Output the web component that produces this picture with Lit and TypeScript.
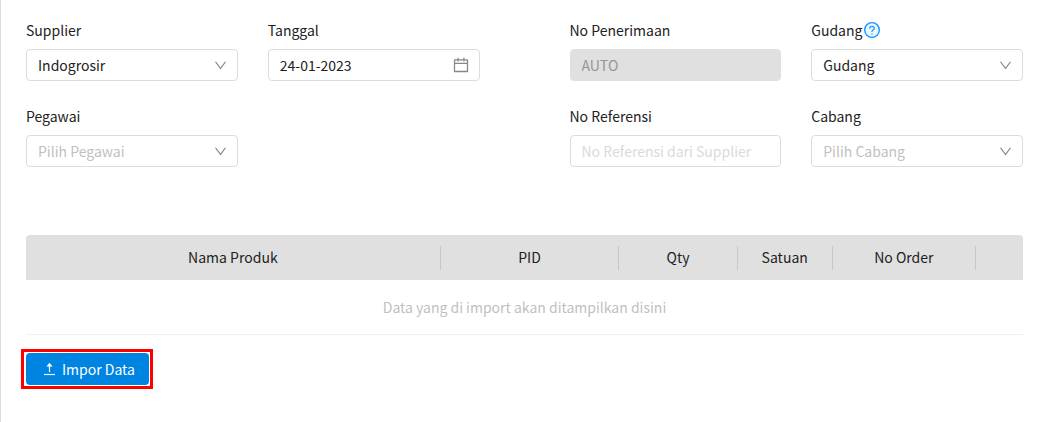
import { LitElement, html, css, nothing } from "lit";
import { customElement } from "lit/decorators.js";

const chevron = html`<svg class="chevron" viewBox="64 64 896 896" aria-hidden="true">
  <path d="M884 256h-75c-5.1 0-9.9 2.5-12.9 6.6L512 654.2 227.9 262.6c-3-4.1-7.8-6.6-12.9-6.6h-75c-6.5 0-10.3 7.4-6.5 12.7l352.6 486.1c12.8 17.6 39 17.6 51.7 0l352.6-486.1c3.9-5.3.1-12.7-6.4-12.7z"/>
</svg>`;

const calendar = html`<svg class="calendar" viewBox="64 64 896 896" aria-hidden="true">
  <path d="M880 184H712v-64c0-4.4-3.6-8-8-8h-56c-4.4 0-8 3.6-8 8v64H384v-64c0-4.4-3.6-8-8-8h-56c-4.4 0-8 3.6-8 8v64H144c-17.7 0-32 14.3-32 32v664c0 17.7 14.3 32 32 32h736c17.7 0 32-14.3 32-32V216c0-17.7-14.3-32-32-32zm-40 656H184V460h656v380zM184 392V256h128v48c0 4.4 3.6 8 8 8h56c4.4 0 8-3.6 8-8v-48h256v48c0 4.4 3.6 8 8 8h56c4.4 0 8-3.6 8-8v-48h128v136H184z"/>
</svg>`;

const question = html`<svg class="question" viewBox="64 64 896 896" aria-hidden="true">
  <circle cx="512" cy="512" r="410" fill="#e6f7ff" stroke="#1890ff" stroke-width="76"/>
  <path fill="#1890ff" d="M623.6 316.7C593.6 290.4 554 276 512 276s-81.6 14.5-111.6 40.7C369.2 344 352 380.7 352 420v7.6c0 4.4 3.6 8 8 8h48c4.4 0 8-3.6 8-8V420c0-44.1 43.1-80 96-80s96 35.9 96 80c0 31.1-22 59.6-56.1 72.7-21.2 8.1-39.2 22.3-52.1 40.9-13.1 19-19.9 41.8-19.9 64.9V620c0 4.4 3.6 8 8 8h48c4.4 0 8-3.6 8-8v-22.7a48.3 48.3 0 0130.9-44.8c59-22.7 97.1-74.7 97.1-132.5.1-39.3-17.1-76-48.3-103.3zM472 732a40 40 0 1080 0 40 40 0 10-80 0z"/>
</svg>`;

const upload = html`<svg class="upload" viewBox="0 0 14 14" aria-hidden="true">
  <path d="M6.5 10V3" stroke="currentColor" stroke-width="1.2"/>
  <path d="M6.5 .8L9.6 4.6H3.4z"/>
  <path d="M1 12.5h11" stroke="currentColor" stroke-width="1.2"/>
</svg>`;

const columns = [
  { title: "Nama Produk", width: 41.6 },
  { title: "PID", width: 17.9 },
  { title: "Qty", width: 11.9 },
  { title: "Satuan", width: 9.5 },
  { title: "No Order", width: 14.4 },
  { title: "", width: 4.7 },
];

@customElement("app-root")
export class AppRoot extends LitElement {
  static styles = css`
    :host {
      display: block;
      min-height: 100vh;
      box-sizing: border-box;
      border-left: 1px solid #dcdcdc;
      padding: 19px 25px;
      background: #fff;
      color: #222;
      font-family: "Noto Sans CJK SC", "Noto Sans", sans-serif;
      font-size: 14px;
      line-height: 22px;
    }
    * { box-sizing: border-box; }
    .form {
      display: grid;
      grid-template-columns: 1fr 1fr;
      column-gap: 90px;
    }
    .group {
      display: grid;
      grid-template-columns: 1fr 1fr;
      gap: 24px 30px;
      align-content: start;
    }
    .field {
      display: flex;
      flex-direction: column;
      gap: 8px;
      min-width: 0;
    }
    .label { display: flex; align-items: center; gap: 2px; }
    .control { display: grid; align-items: center; }
    .control > * { grid-area: 1 / 1; }
    .input {
      appearance: none;
      width: 100%;
      height: 32px;
      margin: 0;
      padding: 0 11px;
      border: 1px solid #dcdcdc;
      border-radius: 4px;
      background: #fff;
      color: inherit;
      font: inherit;
      opacity: 1;
    }
    .input::placeholder { color: #dadada; opacity: 1; }
    .input.empty { color: #bfbfbf; }
    .input:disabled { background: #e0e0e0; border-color: #e0e0e0; color: #969696; }
    svg { display: block; fill: currentColor; }
    .chevron, .calendar {
      justify-self: end;
      margin-right: 11px;
      pointer-events: none;
      color: #888;
    }
    .chevron { width: 13px; height: 13px; }
    .calendar { width: 16px; height: 16px; }
    .question { width: 16px; height: 16px; }
    .table {
      width: 100%;
      margin-top: 68px;
      border-collapse: separate;
      border-spacing: 0;
      table-layout: fixed;
      text-align: center;
    }
    .head {
      height: 45px;
      padding: 0;
      background: #e0e0e0;
      font-weight: 400;
    }
    .head:first-child { border-top-left-radius: 4px; }
    .head:last-child { border-top-right-radius: 4px; }
    .title {
      display: block;
      height: 24px;
      line-height: 22px;
      border-right: 1px solid #c8c8c8;
    }
    .head:last-child .title { border-right: 0; }
    .none {
      height: 55px;
      padding: 0;
      border-bottom: 1px solid #f0f0f0;
      color: #bfbfbf;
    }
    .highlight {
      width: fit-content;
      margin: 14px 0 0 -5px;
      padding: 1px 1px 1px 2px;
      border: 3px solid #f00;
    }
    .button {
      display: flex;
      align-items: center;
      gap: 5px;
      height: 32px;
      padding: 0 14px 0 17px;
      border: 0;
      border-radius: 4px;
      background: #0084e2;
      color: #fff;
      font: inherit;
    }
    .upload { width: 14px; height: 14px; }
  `;

  private select(id: string, label: string, value: string, empty = false, help = false) {
    return html`<div class="field">
      <label class="label" for=${id}>${label}${help ? question : nothing}</label>
      <div class="control">
        <select id=${id} class="input ${empty ? "empty" : ""}"><option>${value}</option></select>
        ${chevron}
      </div>
    </div>`;
  }

  render() {
    return html`
      <form class="form">
        <div class="group">
          ${this.select("supplier", "Supplier", "Indogrosir")}
          <div class="field">
            <label class="label" for="tanggal">Tanggal</label>
            <div class="control">
              <input id="tanggal" class="input" type="text" value="24-01-2023">
              ${calendar}
            </div>
          </div>
          ${this.select("pegawai", "Pegawai", "Pilih Pegawai", true)}
        </div>
        <div class="group">
          <div class="field">
            <label class="label" for="penerimaan">No Penerimaan</label>
            <input id="penerimaan" class="input" type="text" value="AUTO" disabled>
          </div>
          ${this.select("gudang", "Gudang", "Gudang", false, true)}
          <div class="field">
            <label class="label" for="referensi">No Referensi</label>
            <input id="referensi" class="input" type="text" placeholder="No Referensi dari Supplier">
          </div>
          ${this.select("cabang", "Cabang", "Pilih Cabang", true)}
        </div>
      </form>
      <table class="table">
        <colgroup>${columns.map((c) => html`<col style="width:${c.width}%">`)}</colgroup>
        <thead>
          <tr>${columns.map((c) => html`<th class="head" scope="col"><span class="title">${c.title}</span></th>`)}</tr>
        </thead>
        <tbody>
          <tr><td class="none" colspan="6">Data yang di import akan ditampilkan disini</td></tr>
        </tbody>
      </table>
      <div class="highlight">
        <button class="button" type="button">${upload}<span>Impor Data</span></button>
      </div>
    `;
  }
}
